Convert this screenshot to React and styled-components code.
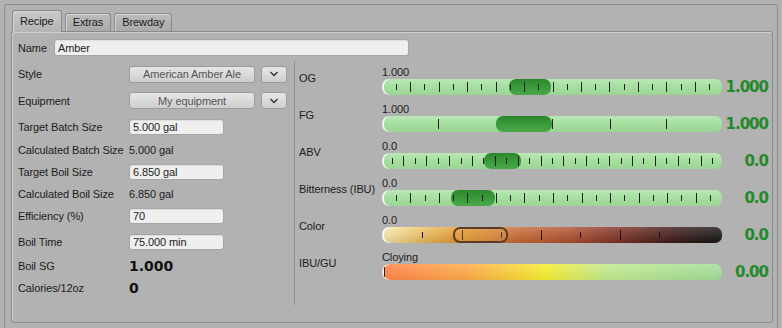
import React from 'react';
import styled, { createGlobalStyle } from 'styled-components';

const GlobalStyle = createGlobalStyle`
  html, body {
    margin: 0;
    background: #b2b2b2;
  }
  body {
    font-family: "Liberation Sans", Arial, sans-serif;
    font-size: 11px;
    letter-spacing: -0.1px;
    color: #1c1c1c;
  }
`;

const Window = styled.div`
  width: 782px;
  height: 328px;
  overflow: hidden;
  box-sizing: border-box;
  padding: 4px 4px 0 4px;
`;

const Frame = styled.div`
  height: 100%;
  box-sizing: border-box;
  border: 1px solid #8e8e8e;
  border-bottom: none;
  border-radius: 2px 2px 0 0;
  padding: 5px 4px 0 6px;
`;

const TabBar = styled.div`
  display: flex;
  align-items: flex-end;
  gap: 3px;
  height: 21px;
  padding-left: 1px;
`;

const Tab = styled.div`
  box-sizing: border-box;
  height: ${p => (p.$active ? '22px' : '18px')};
  margin-bottom: ${p => (p.$active ? '-1px' : '0')};
  position: relative;
  z-index: ${p => (p.$active ? 1 : 0)};
  padding: ${p => (p.$active ? '4px 7px 0' : '2px 7px 0')};
  border: 1px solid #8a8a8a;
  border-bottom: none;
  border-radius: 3px 3px 0 0;
  background: ${p =>
    p.$active
      ? 'linear-gradient(#c9c9c9, #b4b4b4)'
      : 'linear-gradient(#bcbcbc, #aaaaaa)'};
  box-shadow: inset 1px 1px 0 #d6d6d6;
  font-size: 11px;
  color: #1c1c1c;
`;

const Pane = styled.div`
  box-sizing: border-box;
  height: 292px;
  border: 1px solid #8a8a8a;
  border-radius: 3px;
  box-shadow: inset 1px 1px 0 #d0d0d0;
  padding: 6px 4px 0 6px;
`;

const NameRow = styled.div`
  display: flex;
  align-items: center;
  gap: 7px;
  height: 19px;
`;

const Label = styled.span`
  white-space: nowrap;
`;

const Input = styled.div`
  box-sizing: border-box;
  width: ${p => p.$w}px;
  height: ${p => p.$h || 16}px;
  background: #efefef;
  border: 1px solid #a6a6a6;
  border-radius: 3px;
  box-shadow: inset 0 1px 1px rgba(0, 0, 0, 0.08);
  padding: 0 3px;
  display: flex;
  align-items: center;
  font-size: 11px;
`;

const Body = styled.div`
  display: flex;
  margin-top: 4px;
`;

const LeftCol = styled.div`
  width: 277px;
  box-sizing: border-box;
  border-right: 1px solid #8f8f8f;
  display: grid;
  grid-template-columns: 111px 1fr;
  align-content: start;
  height: 244px;
`;

const FormLabel = styled.div`
  height: ${p => p.$h}px;
  display: flex;
  align-items: center;
`;

const FormField = styled.div`
  height: ${p => p.$h}px;
  display: flex;
  align-items: center;
  gap: 6px;
`;

const Combo = styled.div`
  box-sizing: border-box;
  width: ${p => p.$w}px;
  height: 17px;
  border: 1px solid #9c9c9c;
  border-radius: 3px;
  background: linear-gradient(#e6e6e6, #cecece);
  display: flex;
  align-items: center;
  justify-content: center;
  color: #555;
  font-size: 11px;
`;

const BigValue = styled.span`
  font-family: "DejaVu Sans", sans-serif;
  font-weight: bold;
  font-size: 14px;
  letter-spacing: 0;
  color: #111;
`;

const RightCol = styled.div`
  flex: 1;
  padding: 3px 0 0 4px;
  display: flex;
  flex-direction: column;
`;

const MeterRow = styled.div`
  display: grid;
  grid-template-columns: 83px 340px 1fr;
  height: 37px;
`;

const MeterLabel = styled.div`
  padding-top: 7px;
  line-height: 14px;
  white-space: nowrap;
`;

const MeterBlock = styled.div`
  display: flex;
  flex-direction: column;
  padding-top: 1px;
`;

const Caption = styled.div`
  line-height: 14px;
  height: 14px;
`;

const Bar = styled.div`
  position: relative;
  height: 16px;
  border-radius: 7px;
  background: ${p => p.$bg};
  box-shadow: inset 2px 0 0 rgba(255, 255, 255, 0.85);
`;

const Handle = styled.div`
  position: absolute;
  top: 0;
  height: 16px;
  box-sizing: border-box;
  border-radius: 7px;
  background: linear-gradient(#2c872c, #3d9d3d 60%, #4aa84a);
`;

const OutlineHandle = styled.div`
  position: absolute;
  top: 0;
  height: 16px;
  box-sizing: border-box;
  border-radius: 7px;
  border: 2px solid #5b3d26;
  background: rgba(240, 170, 90, 0.25);
`;

const TickLayer = styled.svg`
  position: absolute;
  left: 0;
  top: 0;
`;

const MeterValue = styled.div`
  align-self: start;
  margin-top: 14px;
  text-align: right;
  font-family: "DejaVu Sans", sans-serif;
  font-weight: bold;
  font-size: 15px;
  letter-spacing: -1px;
  color: #23892a;
`;

const greenBg =
  'linear-gradient(rgba(255,255,255,0.25), rgba(255,255,255,0) 50%, rgba(0,0,0,0.05)), #a4df9e';
const colorBg =
  'linear-gradient(rgba(255,255,255,0.18), rgba(0,0,0,0.12)), linear-gradient(to right, #fdf0b4 0%, #f2c262 12%, #e6982a 24%, #cc6c36 40%, #b3522f 55%, #7e3226 70%, #3e1b19 86%, #161616 100%)';
const ibuguBg =
  'linear-gradient(rgba(255,255,255,0.15), rgba(0,0,0,0.05)), linear-gradient(to right, #ff8548 0%, #ffaa48 25%, #f6ee2e 48%, #c2ea8e 66%, #a2dd98 100%)';

const spread = (a, b, n) =>
  Array.from({ length: n }, (_, i) => ({ x: a + ((b - a) * i) / (n - 1), long: i % 2 === 1 }));

const meters = [
  {
    label: 'OG', caption: '1.000', value: '1.000', bg: greenBg,
    handle: { left: 127, width: 42 }, ticks: spread(14, 327, 23), tickColor: '#1f1f1f',
  },
  {
    label: 'FG', caption: '1.000', value: '1.000', bg: greenBg,
    handle: { left: 114, width: 56 },
    ticks: [56, 170, 228, 284].map(x => ({ x, long: true })), tickColor: '#1f1f1f',
  },
  {
    label: 'ABV', caption: '0.0', value: '0.0', bg: greenBg,
    handle: { left: 102, width: 37 }, ticks: spread(10, 330, 29), tickColor: '#1f1f1f',
  },
  {
    label: 'Bitterness (IBU)', caption: '0.0', value: '0.0', bg: greenBg,
    handle: { left: 69, width: 44 }, ticks: spread(14, 328, 23), tickColor: '#1f1f1f',
  },
  {
    label: 'Color', caption: '0.0', value: '0.0', bg: colorBg,
    outline: { left: 71, width: 55 }, ticks: spread(40, 277, 7), tickColor: '#2a0a08',
  },
  {
    label: 'IBU/GU', caption: 'Cloying', value: '0.00', bg: ibuguBg,
    ticks: [{ x: 1.5, long: true }], tickColor: '#3a2010',
  },
];

const formRows = [
  { label: 'Style', h: 26, field: 'combo', text: 'American Amber Ale' },
  { label: 'Equipment', h: 27, field: 'combo', text: 'My equipment' },
  { label: 'Target Batch Size', h: 26, field: 'input', text: '5.000 gal' },
  { label: 'Calculated Batch Size', h: 20, field: 'text', text: '5.000 gal' },
  { label: 'Target Boil Size', h: 24, field: 'input', text: '6.850 gal' },
  { label: 'Calculated Boil Size', h: 20, field: 'text', text: '6.850 gal' },
  { label: 'Efficiency (%)', h: 24, field: 'input', text: '70' },
  { label: 'Boil Time', h: 28, field: 'input', text: '75.000 min' },
  { label: 'Boil SG', h: 20, field: 'big', text: '1.000' },
  { label: 'Calories/12oz', h: 24, field: 'big', text: '0' },
];

const Chevron = () => (
  <svg width="10" height="6" viewBox="0 0 10 6">
    <path d="M1.5 1 L5 4.5 L8.5 1" fill="none" stroke="#333" strokeWidth="1.4" />
  </svg>
);

const Field = ({ row }) => {
  if (row.field === 'combo') {
    return (
      <>
        <Combo $w={126}>{row.text}</Combo>
        <Combo $w={26}><Chevron /></Combo>
      </>
    );
  }
  if (row.field === 'input') return <Input $w={95}>{row.text}</Input>;
  if (row.field === 'big') return <BigValue>{row.text}</BigValue>;
  return <span>{row.text}</span>;
};

const Meter = ({ m }) => (
  <MeterRow>
    <MeterLabel>{m.label}</MeterLabel>
    <MeterBlock>
      <Caption>{m.caption}</Caption>
      <Bar $bg={m.bg}>
        {m.handle && <Handle style={{ left: m.handle.left, width: m.handle.width }} />}
        <TickLayer width="340" height="16">
          {m.ticks.map((t, i) => (
            <line
              key={i}
              x1={Math.round(t.x) + 0.5}
              x2={Math.round(t.x) + 0.5}
              y1={t.long ? 3 : 5}
              y2={t.long ? 13 : 11}
              stroke={m.tickColor}
              strokeWidth="1"
            />
          ))}
        </TickLayer>
        {m.outline && <OutlineHandle style={{ left: m.outline.left, width: m.outline.width }} />}
      </Bar>
    </MeterBlock>
    <MeterValue>{m.value}</MeterValue>
  </MeterRow>
);

const App = () => (
  <Window>
    <GlobalStyle />
    <Frame>
      <TabBar>
        <Tab $active>Recipe</Tab>
        <Tab>Extras</Tab>
        <Tab>Brewday</Tab>
      </TabBar>
      <Pane>
        <NameRow>
          <Label>Name</Label>
          <Input $w={355} $h={17}>Amber</Input>
        </NameRow>
        <Body>
          <LeftCol>
            {formRows.map(row => (
              <React.Fragment key={row.label}>
                <FormLabel $h={row.h}>{row.label}</FormLabel>
                <FormField $h={row.h}><Field row={row} /></FormField>
              </React.Fragment>
            ))}
          </LeftCol>
          <RightCol>
            {meters.map(m => <Meter key={m.label} m={m} />)}
          </RightCol>
        </Body>
      </Pane>
    </Frame>
  </Window>
);

export default App;
